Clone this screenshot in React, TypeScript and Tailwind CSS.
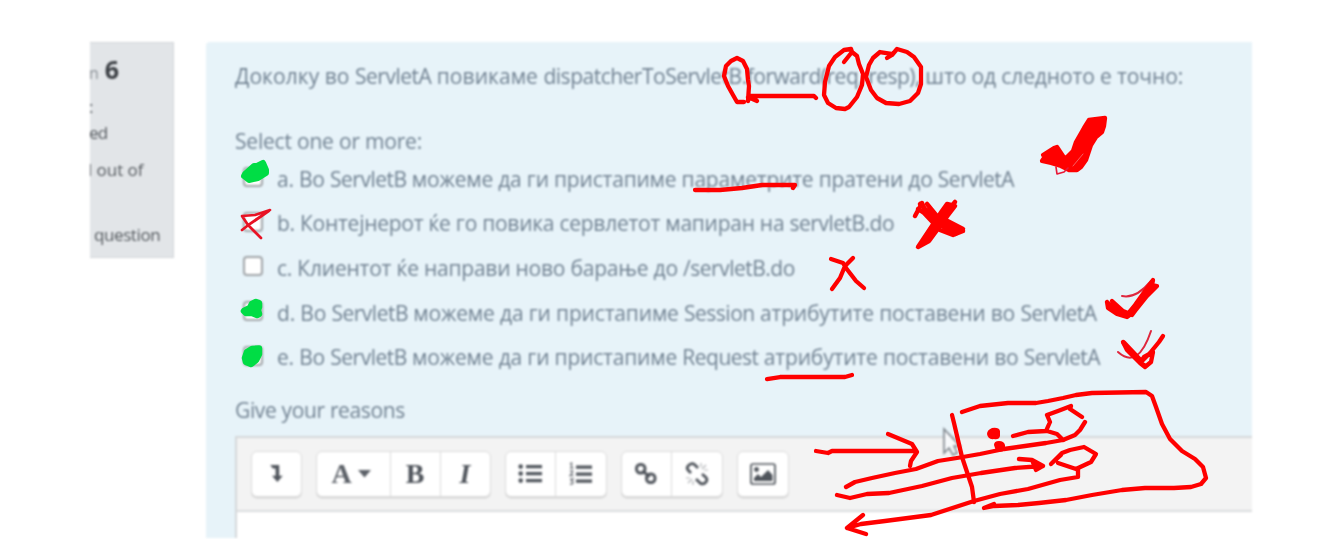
import type { ReactNode } from "react";

const rows = [
  { text: "a. Во ServletB можеме да ги пристапиме параметрите пратени до ServletA", track: "tracking-[-0.21px]" },
  { text: "b. Контејнерот ќе го повика сервлетот мапиран на servletB.do", track: "tracking-[-0.26px]" },
  { text: "c. Клиентот ќе направи ново барање до /servletB.do", track: "tracking-[-0.22px]" },
  { text: "d. Во ServletB можеме да ги пристапиме Session атрибутите поставени во ServletA", track: "tracking-[-0.17px]" },
  { text: "e. Во ServletB можеме да ги пристапиме Request атрибутите поставени во ServletA", track: "tracking-[-0.19px]" },
];

/* Latin words are set slightly tighter than the Cyrillic text around them. */
function Mixed({ text, track }: { text: string; track: string }) {
  const parts = text.split(/([A-Za-z/.(),]{3,}(?: [a-z]+\),)?)/);
  return (
    <span className={`whitespace-pre ${track}`}>
      {parts.map((part, i) => (
        <span key={i} className={i % 2 ? "tracking-[-0.5px]" : undefined}>
          {part}
        </span>
      ))}
    </span>
  );
}

function Group({ className, children }: { className: string; children: ReactNode }) {
  return (
    <div
      className={`flex h-[46px] shrink-0 divide-x divide-[#dcdcdc] rounded-[6px] border border-[#dcdcdc] bg-white shadow-[0_1.5px_0_#d6d6d6] ${className}`}
    >
      {children}
    </div>
  );
}

function Tool({ children }: { children: ReactNode }) {
  return <button className="flex flex-1 items-center justify-center text-[#50555c]">{children}</button>;
}

function Info() {
  return (
    <aside className="h-[216px] w-[84px] shrink-0 overflow-hidden border-y border-r border-[#d3d6d9] bg-[#e2e5e8] text-[17px] leading-[24px] text-[#54595e]">
      <div className="flex h-[54px] items-center">
        <span className="-ml-[1px] pt-[5px] text-[16px] text-[#8a9096]">n</span>
        <span className="-mt-[3px] ml-[6px] text-[25px] font-bold tracking-tight text-[#3b3f44]">6</span>
      </div>
      <div className="-mt-[2px] h-[24px] -ml-[1px]">:</div>
      <div className="mt-[2px] h-[24px] -ml-[1px] tracking-[-0.8px]">ed</div>
      <div className="mt-[13px] h-[24px] -ml-[2px] whitespace-nowrap tracking-[-0.05px]">l out of</div>
      <div className="mt-[41px] h-[24px] pl-[4px] tracking-[-0.4px]">question</div>
    </aside>
  );
}

function Toolbar() {
  return (
    <div className="flex h-[74px] items-center border-b-2 border-[#dadcde] bg-[#f3f3f3] pl-[13.500px]">
      <Group className="w-[51px]">
        <Tool>
          <svg width="13" height="18" viewBox="0 0 14 20" fill="currentColor">
            <path d="M0 0h10v12h4l-6 7-6-7h4V4H3z" />
          </svg>
        </Tool>
      </Group>
      <Group className="ml-[14px] w-[175px] font-['Liberation_Serif',serif] text-[28px] font-bold leading-none">
        <button className="flex w-[74px] items-center justify-center gap-[6px] pr-[4px] text-[#5c6168]">
          <span>A</span>
          <svg width="13" height="8" viewBox="0 0 13 8" fill="currentColor">
            <path d="M0 0h13L6.500 7.500z" />
          </svg>
        </button>
        <Tool>B</Tool>
        <Tool>
          <span className="italic">I</span>
        </Tool>
      </Group>
      <Group className="ml-[14px] w-[102px]">
        <Tool>
          <svg width="24" height="20" viewBox="0 0 24 20" fill="currentColor">
            <path d="M8 1h16v3.200H8zM8 8h16v3.200H8zM8 15h16v3.200H8z" />
            <circle cx="2.700" cy="2.600" r="2.300" />
            <circle cx="2.700" cy="9.600" r="2.300" />
            <circle cx="2.700" cy="16.600" r="2.300" />
          </svg>
        </Tool>
        <Tool>
          <svg width="24" height="24" viewBox="0 0 24 24" fill="currentColor">
            <path d="M7 3.500h16v3.200H7zM7 10.500h16v3.200H7zM7 17.500h16v3.200H7z" />
            <path
              d="M1 2l1.500-1v5M1 6h3.500M1 9.500c3-2 4 0 0 4h3.500M1 17h3l-1.500 2c2.500 0 2 4-1.500 3"
              fill="none"
              stroke="currentColor"
              strokeWidth="1.500"
              opacity=".75"
            />
          </svg>
        </Tool>
      </Group>
      <Group className="ml-[14px] w-[102px]">
        <Tool>
          <svg width="24" height="24" viewBox="0 0 24 24" fill="none" stroke="currentColor" strokeWidth="2.900">
            <rect x="2.500" y="2.500" width="8.500" height="8.500" rx="3.800" />
            <rect x="12.500" y="12" width="8.500" height="8.500" rx="3.800" />
            <path d="M8.500 8.500L15.500 15" />
          </svg>
        </Tool>
        <Tool>
          <svg width="24" height="24" viewBox="0 0 24 24" fill="none" stroke="currentColor" strokeWidth="2.800">
            <path d="M6 11L3 8q-2-2.500 1-5t5.500-.5L13 6M11 17l4 4q3 2 5.500-.5t.5-5L17 12" />
            <path d="M3 21l4-4M8 23v-4M1 16h4M17 7l4-4M16 5V1M19 8h4" strokeWidth="1.200" opacity=".45" />
          </svg>
        </Tool>
      </Group>
      <Group className="ml-[14px] w-[52px]">
        <Tool>
          <svg width="26" height="22" viewBox="0 0 26 22" fill="currentColor">
            <rect x="1" y="1" width="24" height="20" rx="2" fill="none" stroke="currentColor" strokeWidth="1.700" />
            <circle cx="6.500" cy="6.500" r="2.400" />
            <path d="M4 18v-3l4-4 3 3 7-7 4.500 5v6z" />
          </svg>
        </Tool>
      </Group>
    </div>
  );
}

function Question() {
  return (
    <main className="flex h-[496px] w-[1046px] flex-col overflow-hidden rounded-tl-[4px] bg-[#e7f3f9] pl-[29px] pt-[19px] text-[21px] leading-[30px] text-[#708191]">
      <p className="h-[30px] whitespace-nowrap">
        <Mixed text="Доколку во ServletA повикаме " track="tracking-[0.05px]" />
        <Mixed text="dispatcherToServletB.forward(req, resp), што од следното е точно:" track="tracking-[-0.12px]" />
      </p>
      <p className="mt-[35px] h-[30px] whitespace-nowrap">
        <span className="tracking-[-0.2px]">Select one or more:</span>
      </p>
      <ul className="mt-[0.500px]">
        {rows.map((row) => (
          <li key={row.text} className="flex h-[44.600px] items-center whitespace-nowrap pl-[8px]">
            <span className="-mt-[3px] size-[20px] shrink-0 rounded-[4px] border-2 border-[#a0a4a8] bg-white" />
            <span className="ml-[14px]">
              <Mixed text={row.text} track={row.track} />
            </span>
          </li>
        ))}
      </ul>
      <p className="mt-[15.500px] h-[30px] whitespace-nowrap">
        <span className="tracking-[-0.35px]">Give your reasons</span>
      </p>
      <section className="mt-[11px] grow border-l-2 border-t-2 border-[#d5d8da] bg-white">
        <Toolbar />
      </section>
    </main>
  );
}

function Ink() {
  return (
    <svg
      className="pointer-events-none absolute left-0 top-0"
      width="1339"
      height="539"
      viewBox="0 0 1339 539"
      fill="none"
      stroke="#ff0000"
      strokeWidth="4.300"
      strokeLinecap="round"
      strokeLinejoin="round"
    >
      <path d="M744 102L737 102L733 95L728 86L724 76L726 66L731 61L737 58L743 61L747 69L748 80L749 86L748 101M748 97L757 101L751 96L814 96L816 98" />
      <path d="M844 62L852 52L857 56L859 64L863 74L862 85L857 97L849 107L845 109L836 108L828 103L824 95L825 82L829 66L835 57L844 50L851 49L852 52" />
      <path d="M887 58L893 54L880 52L873 58L869 65L866 77L871 90L877 98L886 103L899 104L910 101L918 93L921 84L921 67L914 57L907 52L897 49L892 55L887 58" />
      <path d="M695 190L720 190L742 188L762 185L795 185L793 188" />

      <path
        d="M1043 155L1054 148L1057 147L1065 159L1073 151L1076 142L1084 128L1089 120L1105 118L1104 126L1102 132L1096 137L1091 145L1086 160L1081 167L1077 170L1069 170L1061 166L1051 163L1042 161L1046 155Z"
        fill="#ff0000"
      />
      <path d="M1073 166L1083 154" stroke="#e7f3f9" strokeWidth=".4" />
      <path d="M1056 167L1057 174L1064 172L1068 168" stroke="#e81837" strokeWidth="1.700" />

      <g strokeWidth="4.500">
        <path d="M915 216L922 203L927 215L963 231L953 235L940 230L924 213L918 209" />
        <path d="M927 204L936 215L963 229L953 229L927 211L920 204" />
        <path d="M955 202L924 239L932 236L955 206L947 204L942 211L918 247L929 241L951 211" />
        <path d="M948 209L936 224L927 238M929 212L945 226L955 232" strokeWidth="8" />
      </g>
      <path d="M831 259L843 263L846 268L856 281L864 288M853 258L845 266L840 278L832 289" />
      <path d="M767 379L780 377L845 377L852 375" />

      <path d="M1122 296Q1136 299 1151 281M1118 352Q1138 370 1151 331" stroke="#df263d" strokeWidth="2" />
      <path d="M1107 302L1114 309L1127 315L1135 305L1153 280L1152 285L1157 286L1147 296L1135 311L1127 317L1117 314L1108 308L1107 302M1112 301L1123 311L1130 314L1143 300M1113 302L1119 311L1132 315L1153 287" />
      <path d="M1111 306L1128 315M1128 314L1142 300" strokeWidth="5" />
      <path d="M1123 342L1127 350L1140 363L1145 367L1151 362L1153 352L1144 357L1140 363L1150 353L1159 342L1163 336M1125 346L1138 359M1140 363L1146 366" />
      <path d="M1124 343L1141 361" strokeWidth="5" />

      <path d="M816 451L828 453L832 451L916 451M888 434L900 439L912 444L917 452L911 461L910 466" />
      <path d="M952 415L954 423L958 440L962 457L967 472L972 487L974 502" />
      <path d="M962 412L980 406L1008 403L1036 403L1048 401L1063 398L1076 395L1092 393L1146 392L1152 396L1156 407L1162 424L1170 439L1182 451L1195 459L1203 467L1206 478L1201 484L1191 487L1174 488L1145 488L1122 490L1092 495L1066 500L1039 503L1018 505L994 506L984 508L994 504" />
      <path d="M846 487L855 482L872 478L895 473L916 469L938 461L957 458L980 454L1004 449L1025 446L1046 443L1063 440M837 495L850 498L867 494L889 493L922 486L952 478L981 473L1015 468L1043 466L1036 470L1032 460L1019 459L1032 460L1043 466" />
      <path d="M863 515L847 528L866 534M847 528L861 524L885 521L931 515L974 501L1000 494L1028 489L1060 480L1078 477L1078 469" />
      <path d="M1013 436L1028 432L1046 431L1050 422L1047 415L1058 411L1071 406L1070 409L1082 417M1085 422L1080 430L1075 435L1063 440L1057 434L1047 431" />
      <path d="M1051 464L1062 453L1070 450L1084 447L1096 454L1091 462L1076 469L1058 463M1051 464L1061 455" />
      <g fill="#ff0000" stroke="none">
        <path d="M987 434q0-4 5-6q7-1 8 3v5q-1 4-6 3q-6 1-7-5zM994 445q0-4 5-4q5 0 6 4v5q-3 3-9 1z" />
      </g>

      <path d="M245 174L254 166L257 166L263 163L266 170L266 173L258 178L249 180L244 176Z" fill="#00dd45" stroke="#00dd45" strokeWidth="6" />
      <path d="M244 311L250 308L252 304L256 302L259 303L259 307L258 310L259 314L257 315L252 313L246 313Z" fill="#00dd45" stroke="#00dd45" strokeWidth="6.500" />
      <path d="M247 352L252 349L259 348.500L259 354L256 360L251 364L246 362L245 358Z" fill="#00dd45" stroke="#00dd45" strokeWidth="6.500" />
      <path d="M242 230L251 223L270 210L255 215L242 216L248 225L261 238M250 224L269 211" stroke="#e81224" strokeWidth="2.700" />
    </svg>
  );
}

export default function App() {
  return (
    <div className="relative h-[539px] w-[1339px] overflow-hidden bg-white font-['Open_Sans','Noto_Sans',sans-serif]">
      <div className="relative flex gap-[32px] pl-[90px] pt-[42px] blur-[0.8px]">
        <Info />
        <Question />
        <svg className="absolute left-[942px] top-[427px]" width="20" height="30" viewBox="0 0 20 30">
          <path d="M2 2v24l5-5 4 7 4-2-3-7h6z" fill="#f7f9fb" stroke="#7e858c" strokeWidth="1.600" />
        </svg>
      </div>
      <Ink />
    </div>
  );
}
